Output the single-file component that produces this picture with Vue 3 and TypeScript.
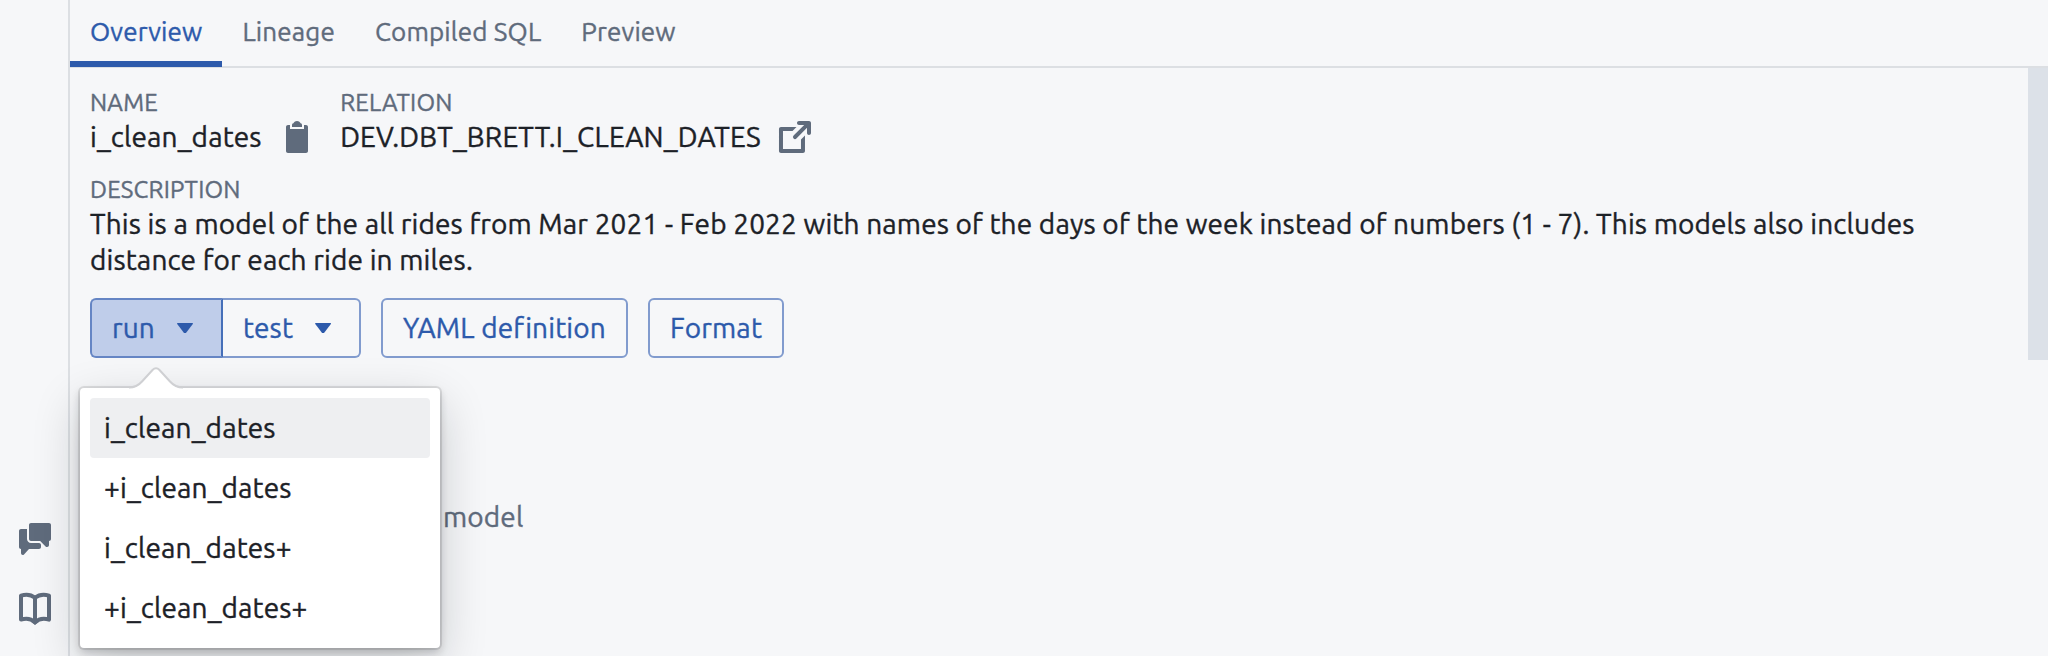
<script setup lang="ts">
import { ref } from 'vue'

const tabs = ['Overview', 'Lineage', 'Compiled SQL', 'Preview']
const activeTab = ref('Overview')
const selectors = ['i_clean_dates', '+i_clean_dates', 'i_clean_dates+', '+i_clean_dates+']
const highlighted = ref(0)
</script>

<template>
  <div class="app">
    <aside class="rail">
      <svg class="icon" viewBox="0 0 16 16">
        <path d="M6 10c-1.1 0-2-.9-2-2V3H1c-.55 0-1 .45-1 1v8c0 .55.45 1 1 1v2c0 .9.9 1.300 1.500.700L5 13h5c.55 0 1-.45 1-1v-1c0-.55-.45-1-1-1H6z" />
        <path d="M15 0H6c-.55 0-1 .45-1 1v7c0 .55.45 1 1 1h4.590l2.700 2.710A1.003 1.003 0 0 0 15 11V9c.55 0 1-.45 1-1V1c0-.55-.45-1-1-1z" />
      </svg>
      <svg class="icon" viewBox="0 0 16 16">
        <path class="line" d="M8 2.300C6.300 1 3.500.5 1 1.300v12C3.500 12.500 6.300 13 8 14.700C9.700 13 12.500 12.500 15 13.300V1.300C12.500.5 9.700 1 8 2.300z" />
        <path class="line" d="M8 2.300v12.400" />
        <path d="M6 14.200L8 16L10 14.200L8 13z" />
      </svg>
    </aside>
    <main class="panel">
      <nav class="tabs">
        <button v-for="t in tabs" :key="t" class="tab" :class="{ active: t === activeTab }" @click="activeTab = t">{{ t }}</button>
      </nav>
      <div class="body">
        <section class="content">
          <div class="fields">
            <div class="field">
              <div class="label">NAME</div>
              <div class="value">i_clean_dates
                <svg class="icon clip" viewBox="0 0 16 16">
                  <path d="M11 2c0-.55-.45-1-1-1h.22C9.880.4 9.240 0 8.500 0S7.120.4 6.780 1H7c-.55 0-1 .45-1 1v1h5V2z" />
                  <path d="M13 2h-1v2H5V2H4c-.55 0-1 .45-1 1v12c0 .55.45 1 1 1h9c.55 0 1-.45 1-1V3c0-.55-.45-1-1-1z" />
                </svg>
              </div>
            </div>
            <div class="field">
              <div class="label">RELATION</div>
              <div class="value relation">DEV.DBT_BRETT.I_CLEAN_DATES
                <svg class="icon share" viewBox="0 0 16 16">
                  <path d="M10.990 13.990h-9v-9h4.760l2-2H.99c-.55 0-1 .45-1 1v11c0 .55.45 1 1 1h11c.55 0 1-.45 1-1V7.240l-2 2v4.750zM15 0h-5c-.55 0-1 .45-1 1s.45 1 1 1h2.590L7.290 7.290a1 1 0 0 0 1.420 1.420L14 3.410V6c0 .55.45 1 1 1s1-.45 1-1V1c0-.55-.45-1-1-1z" />
                </svg>
              </div>
            </div>
          </div>
          <div class="label description-label">DESCRIPTION</div>
          <p class="description">This is a model of the all rides from Mar 2021 - Feb 2022 with names of the days of the week instead of numbers (1 - 7). This models also includes distance for each ride in miles.</p>
          <div class="actions">
            <div class="group">
              <div class="anchor">
                <button class="btn run">run<i class="caret"></i></button>
                <div class="popover">
                  <svg class="arrow" viewBox="0 0 54 24">
                    <path class="arrow-fill" d="M0 24V22C6 22 9 20 13 16L23.500 4Q27 0 30.500 4L41 16C45 20 48 22 54 22V24z" />
                    <path class="arrow-edge" d="M0 21.500C6 21.500 9 20 13 15.500L23.500 4Q27 .5 30.500 4L41 15.500C45 20 48 21.500 54 21.500" />
                  </svg>
                  <ul class="menu">
                    <li v-for="(s, i) in selectors" :key="s" :class="{ on: i === highlighted }" @mouseenter="highlighted = i">{{ s }}</li>
                  </ul>
                </div>
              </div>
              <button class="btn test">test<i class="caret"></i></button>
            </div>
            <button class="btn yaml">YAML definition</button>
            <button class="btn format">Format</button>
          </div>
          <div class="note">model</div>
        </section>
        <div class="scrollbar"></div>
      </div>
    </main>
  </div>
</template>

<style>
body {
  margin: 0;
  overflow: hidden;
}
</style>

<style scoped>
.app {
  display: flex;
  width: 2048px;
  height: 656px;
  overflow: hidden;
  background: #f6f7f9;
  color: #1c2127;
  font: 28px/36px Ubuntu, "Noto Sans", sans-serif;
  letter-spacing: 0.14px;
  -webkit-text-stroke: 0.4px currentColor;
}
button {
  font: inherit;
  letter-spacing: inherit;
  background: none;
  margin: 0;
  cursor: pointer;
}
.rail {
  box-sizing: border-box;
  width: 70px;
  flex: none;
  border-right: 2px solid #dcdfe3;
  display: flex;
  flex-direction: column;
  justify-content: flex-end;
  align-items: center;
  gap: 38px;
  padding: 0 0 31px 2px;
}
.icon {
  display: block;
  width: 32px;
  height: 32px;
  fill: #5f6b7c;
  flex: none;
  overflow: visible;
}
.line {
  fill: none;
  stroke: #5f6b7c;
  stroke-width: 2;
  stroke-linejoin: round;
}
.panel {
  flex: 1;
  min-width: 0;
}
.tabs {
  box-sizing: border-box;
  height: 68px;
  display: flex;
  border-bottom: 2px solid #dcdfe3;
}
.tab {
  box-sizing: border-box;
  height: 67px;
  padding: 3px 20px 0;
  border: 0;
  border-bottom: 6px solid transparent;
  font-size: 26px;
  letter-spacing: 0.16px;
  line-height: 58px;
  color: #5f6b7c;
}
.tab.active {
  color: #2d5aab;
  border-color: #2d5aab;
}
.body {
  display: flex;
  height: 588px;
}
.content {
  flex: 1;
  padding: 18px 98px 0 20px;
}
.scrollbar {
  width: 20px;
  height: 292px;
  background: #dce1e8;
}
.fields {
  display: flex;
  gap: 28px;
}
.label {
  font-size: 24px;
  line-height: 34px;
  letter-spacing: 0.2px;
  color: #5f6b7c;
}
.value {
  display: flex;
  align-items: center;
  height: 36px;
  margin-top: -1px;
}
.relation {
  letter-spacing: 0.19px;
}
.clip {
  margin-left: 18.5px;
}
.share {
  margin-left: 18px;
}
.description-label {
  margin-top: 18px;
}
.description {
  margin: -1px 0 0;
}
.actions {
  display: flex;
  gap: 20px;
  margin-top: 20px;
}
.group {
  display: flex;
}
.anchor {
  position: relative;
}
.btn {
  box-sizing: border-box;
  display: flex;
  align-items: center;
  justify-content: center;
  height: 60px;
  padding: 0;
  border: 2px solid #819bce;
  border-radius: 6px;
  color: #2d5aab;
  letter-spacing: 0.14px;
}
.run {
  width: 133px;
  padding-right: 8px;
  background: #bfcdea;
  border-color: #6585c4;
  border-right-color: #456fb9;
  border-radius: 6px 0 0 6px;
}
.test {
  width: 138px;
  padding-right: 8px;
  border-left: 0;
  border-radius: 0 6px 6px 0;
}
.yaml {
  width: 247px;
}
.format {
  width: 136px;
}
.caret {
  width: 16px;
  height: 11px;
  margin-left: 22px;
  background: currentColor;
  clip-path: polygon(4% 0, 96% 0, 100% 12%, 56% 96%, 44% 96%, 0 12%);
}
.popover {
  position: absolute;
  left: -10px;
  top: 90px;
  z-index: 2;
  box-sizing: border-box;
  width: 360px;
  height: 260px;
  padding: 10px;
  background: #fff;
  border-radius: 4px;
  color: #1c2127;
  box-shadow: 0 0 0 2px rgba(17, 20, 24, 0.1), 0 4px 8px rgba(17, 20, 24, 0.2), 0 16px 48px rgba(17, 20, 24, 0.2);
}
.arrow {
  position: absolute;
  left: 49px;
  top: -22px;
  width: 54px;
  height: 24px;
}
.arrow-fill {
  fill: #fff;
}
.arrow-edge {
  fill: none;
  stroke: #cfd0d3;
  stroke-width: 2;
}
.menu {
  list-style: none;
  margin: 0;
  padding: 0;
}
.menu li {
  height: 60px;
  padding-left: 14px;
  line-height: 60px;
  border-radius: 4px;
}
.menu li.on {
  background: #eeeff1;
}
.note {
  margin: 141px 0 0 353px;
  color: #5f6b7c;
}
</style>
